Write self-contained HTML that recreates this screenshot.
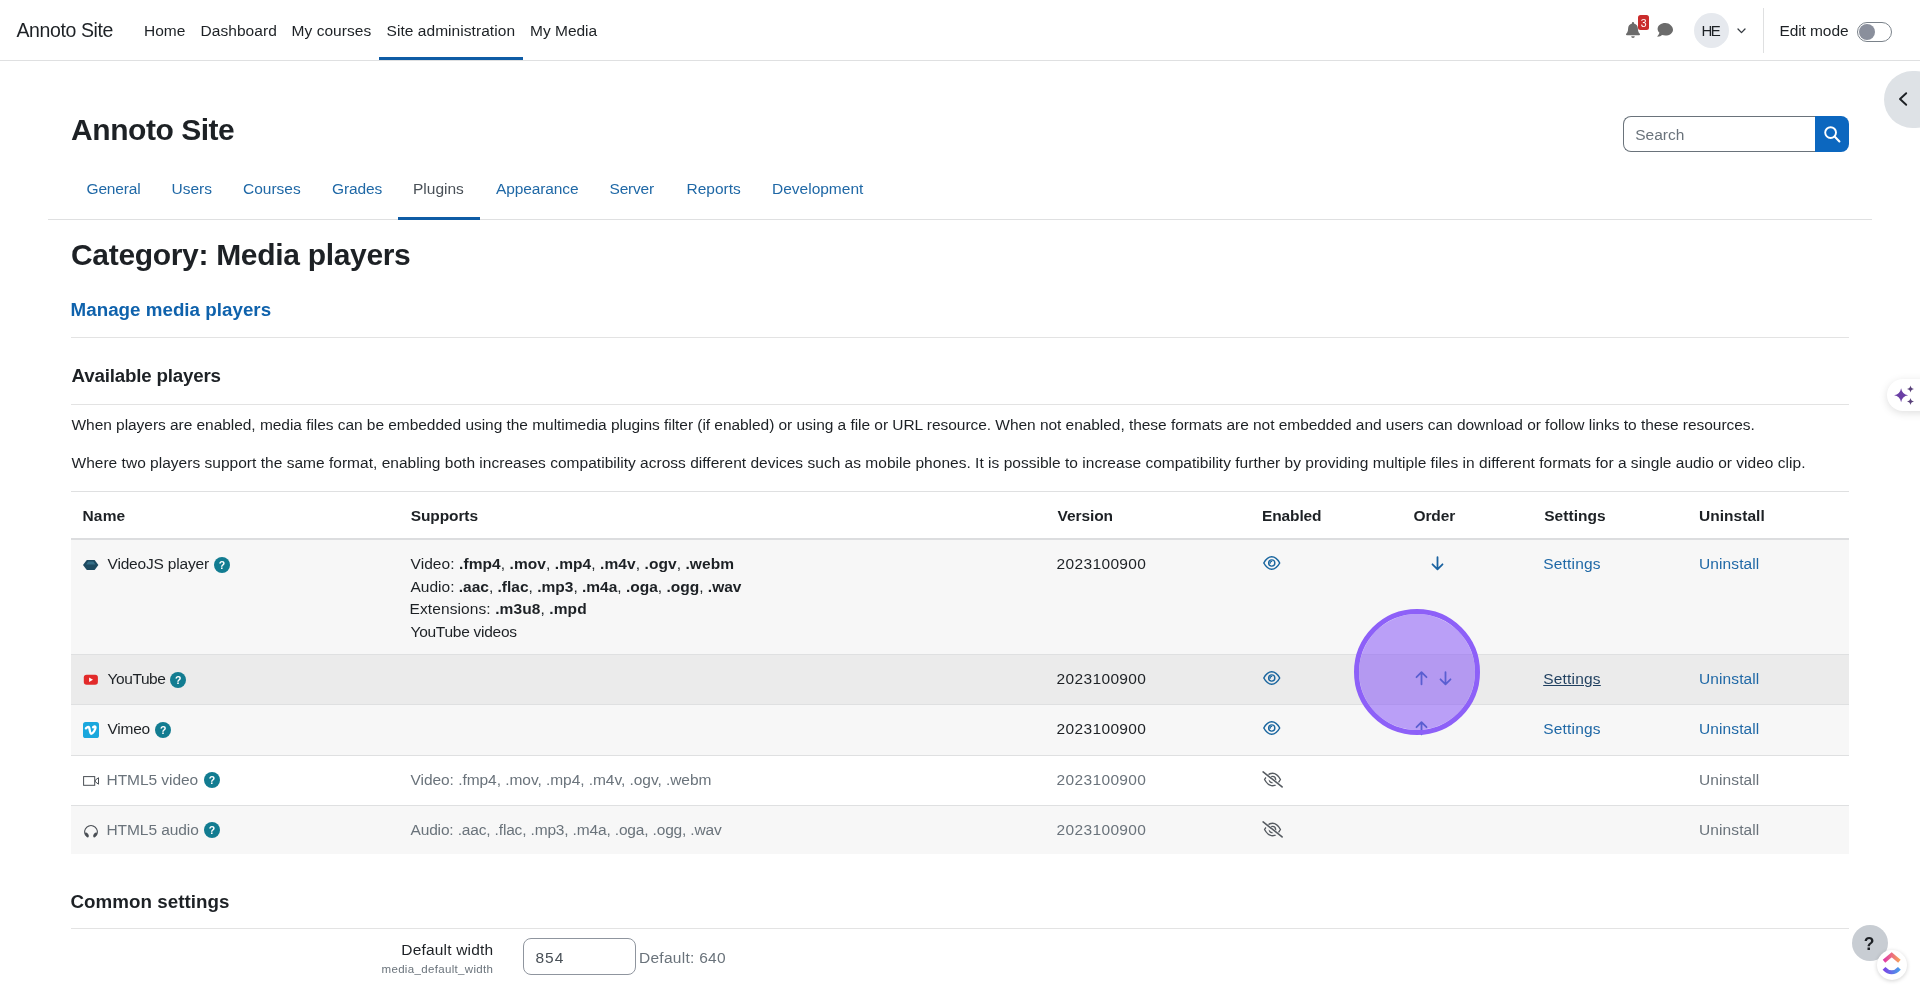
<!DOCTYPE html>
<html lang="en">
<head>
<meta charset="utf-8">
<title>Annoto Site: Administration: Plugins: Media players</title>
<style>
html,body{margin:0;padding:0;background:#fff;}
body{width:1920px;height:993px;position:relative;overflow:hidden;font-family:"Liberation Sans",sans-serif;color:#1d2125;}
.t{position:absolute;white-space:nowrap;font-family:"Liberation Sans",sans-serif;}
.t b{font-weight:700;}
.a{position:absolute;}
.hl{position:absolute;height:1px;background:#dfe0e1;}
svg{position:absolute;overflow:visible;}
.help{position:absolute;width:16px;height:16px;border-radius:50%;background:#127c91;color:#fff;font:700 10.5px/17.400px "Liberation Sans",sans-serif;text-align:center;}
</style>
</head>
<body>
<div id="page" style="position:absolute;left:0;top:0;width:1920px;height:993px;will-change:transform;">
<!-- ===== top navbar ===== -->
<div class="hl" style="left:0;top:60px;width:1920px;"></div>
<div class="a" style="left:379px;top:57px;width:144px;height:3px;background:#0f5ca5;"></div>
<!-- bell -->
<svg style="left:1625px;top:21px;" width="16" height="18" viewBox="0 0 16 18"><path d="M8 0.9c-.55 0-1 .45-1 1v.55C4.6 2.95 3.1 5 3.1 7.4c0 2.6-.7 4-1.7 5.1-.3.33-.45.6-.4.95.06.42.42.75.9.75h12.2c.48 0 .84-.33.9-.75.05-.35-.1-.62-.4-.95-1-1.1-1.7-2.5-1.7-5.1 0-2.4-1.5-4.45-3.9-4.95V1.9c0-.55-.45-1-1-1z" fill="#6b6b6b"/><path d="M6.2 15.2a1.8 1.8 0 0 0 3.6 0z" fill="#6b6b6b"/></svg>
<div class="a" style="left:1638px;top:15px;width:11px;height:15px;border-radius:2.5px;background:#ca2c2c;"></div>
<!-- chat -->
<svg style="left:1656px;top:22px;" width="18" height="16" viewBox="0 0 18 16"><path d="M9.3 1C5 1 1.6 3.6 1.6 6.9c0 1.5.7 2.85 1.85 3.9-.3 1.3-1.05 2.5-2.05 3.5-.15.15-.05.45.2.45 1.9 0 3.55-.85 4.6-1.65.95.3 2 .5 3.1.5 4.3 0 7.7-2.65 7.7-5.9S13.600 1 9.3 1z" fill="#6b6b6b"/></svg>
<!-- avatar -->
<div class="a" style="left:1694px;top:13px;width:35px;height:35px;border-radius:50%;background:#e6e9ee;"></div>
<!-- caret -->
<svg style="left:1737px;top:28px;" width="9" height="6" viewBox="0 0 9 6"><path d="M1 1 L4.5 4.6 L8 1" fill="none" stroke="#343a40" stroke-width="1.3" stroke-linecap="round" stroke-linejoin="round"/></svg>
<!-- divider -->
<div class="a" style="left:1763px;top:8px;width:1px;height:45px;background:#dfe0e1;"></div>
<!-- toggle -->
<div class="a" style="left:1857px;top:22px;width:35px;height:20px;box-sizing:border-box;border:1px solid #7a828a;border-radius:10px;background:#fff;"></div>
<div class="a" style="left:1859px;top:24px;width:16px;height:16px;border-radius:50%;background:#8a8f9c;"></div>


<!-- ===== drawer toggle ===== -->
<div class="a" style="left:1884px;top:71px;width:60px;height:57px;border-radius:29px;background:#dee2e6;"></div>
<svg style="left:1898px;top:92px;" width="10" height="14" viewBox="0 0 10 14"><path d="M8.2 1.2 L2 7 L8.2 12.8" fill="none" stroke="#1d2125" stroke-width="1.9" stroke-linecap="round" stroke-linejoin="round"/></svg>

<!-- ===== search ===== -->
<div class="a" style="left:1623px;top:116px;width:192px;height:36px;box-sizing:border-box;border:1px solid #6a737b;border-right:0;border-radius:8px 0 0 8px;background:#fff;"></div>
<div class="a" style="left:1815px;top:116px;width:34px;height:36px;border-radius:0 8px 8px 0;background:#0c67bf;"></div>
<svg style="left:1823px;top:125px;" width="18" height="18" viewBox="0 0 18 18"><circle cx="7.6" cy="7.6" r="5.4" fill="none" stroke="#fff" stroke-width="1.9"/><path d="M11.6 11.6 L16.4 16.4" stroke="#fff" stroke-width="2.1" stroke-linecap="round"/></svg>

<!-- ===== secondary nav ===== -->
<div class="hl" style="left:48px;top:219px;width:1824px;"></div>
<div class="a" style="left:398px;top:217px;width:82px;height:3px;background:#0f5ca5;"></div>

<!-- ===== section rules ===== -->
<div class="hl" style="left:71px;top:337px;width:1778px;background:#e3e3e3;"></div>
<div class="hl" style="left:71px;top:404px;width:1778px;background:#e3e3e3;"></div>
<div class="hl" style="left:71px;top:928px;width:1778px;background:#e3e3e3;"></div>

<!-- ===== table ===== -->
<div class="hl" style="left:71px;top:491px;width:1778px;"></div>
<div class="a" style="left:71px;top:538px;width:1778px;height:2px;background:#dcdddf;"></div>
<div class="a" style="left:71px;top:540px;width:1778px;height:114px;background:#f7f7f7;"></div>
<div class="hl" style="left:71px;top:654px;width:1778px;"></div>
<div class="a" style="left:71px;top:655px;width:1778px;height:49px;background:#ebebeb;"></div>
<div class="hl" style="left:71px;top:704px;width:1778px;"></div>
<div class="a" style="left:71px;top:705px;width:1778px;height:50px;background:#f7f7f7;"></div>
<div class="hl" style="left:71px;top:755px;width:1778px;"></div>
<div class="hl" style="left:71px;top:805px;width:1778px;"></div>
<div class="a" style="left:71px;top:806px;width:1778px;height:48px;background:#f7f7f7;"></div>
<svg style="left:82px;top:559px;" width="18" height="12" viewBox="0 0 18 12"><path d="M1 6 L4.8 1 H12.600 L16.400 6 L12.600 11 H4.8 Z" fill="#1d4a60"/><path d="M4.2 5.6 L6.2 2.6 H11.400 L13.400 5.6 Z" fill="#3f7d98" opacity=".7"/></svg>
<div class="help" style="left:214px;top:557px;">?</div>
<svg style="left:83px;top:674px;" width="16" height="12" viewBox="0 0 16 12"><rect x="0.8" y="0.7" width="14.100" height="10.100" rx="2.800" fill="#e22a2a"/><path d="M6.100 3.500 L10 5.750 L6.100 8 Z" fill="#fff"/></svg>
<div class="help" style="left:170.2px;top:671.8px;">?</div>
<svg style="left:83px;top:722px;" width="16" height="16" viewBox="0 0 16 16"><rect x="0" y="0" width="16" height="16" rx="2.600" fill="#1aa7dd"/><path d="M2.900 6.400 C4.200 5.100 5.500 4.200 6.100 5.500 C6.800 7.100 6.900 11.800 8.100 11.800 C9.600 11.800 12.900 7.400 12.500 5.100 C12.300 4 10.900 4.200 10.100 5.300" fill="none" stroke="#fff" stroke-width="2.300" stroke-linecap="round" stroke-linejoin="round"/></svg>
<div class="help" style="left:155.3px;top:721.8px;">?</div>
<svg style="left:83px;top:775px;" width="17" height="12" viewBox="0 0 17 12"><rect x="0.6" y="1.600" width="11.100" height="8.700" fill="none" stroke="#4a4f55" stroke-width="1"/><path d="M12.300 5.100 L15.500 2.700 V9.200 L12.300 6.800 Z" fill="none" stroke="#4a4f55" stroke-width="1" stroke-linejoin="miter"/></svg>
<div class="help" style="left:204px;top:772px;">?</div>
<svg style="left:83px;top:824px;" width="16" height="15" viewBox="0 0 16 15"><path d="M2.700 11.300 A6.300 6.300 0 1 1 13.300 11.300" fill="none" stroke="#4a4f55" stroke-width="1.300"/><ellipse cx="3.900" cy="10.900" rx="1.500" ry="2.700" transform="rotate(-32 3.900 10.900)" fill="#4a4f55"/><ellipse cx="12.100" cy="10.900" rx="1.500" ry="2.700" transform="rotate(32 12.100 10.900)" fill="#4a4f55"/></svg>
<div class="help" style="left:204px;top:822px;">?</div>
<svg style="left:1262.75px;top:555.85px;" width="17.5" height="14" viewBox="0 0 17.5 14"><path d="M0.8 7 C3 3 5.900 0.8 8.75 0.8 S14.500 3 16.700 7 C14.500 11 11.600 13.200 8.75 13.200 S3 11 0.8 7 Z" fill="none" stroke="#1a669f" stroke-width="1.5" stroke-linejoin="round"/><circle cx="8.75" cy="7" r="3.100" fill="none" stroke="#1a669f" stroke-width="1.400"/><path d="M7.100 7.200 A1.700 1.700 0 0 1 8.600 5.400" fill="none" stroke="#1a669f" stroke-width="1.300" stroke-linecap="round"/></svg>
<svg style="left:1262.75px;top:671px;" width="17.5" height="14" viewBox="0 0 17.5 14"><path d="M0.8 7 C3 3 5.900 0.8 8.75 0.8 S14.500 3 16.700 7 C14.500 11 11.600 13.200 8.75 13.200 S3 11 0.8 7 Z" fill="none" stroke="#1a669f" stroke-width="1.5" stroke-linejoin="round"/><circle cx="8.75" cy="7" r="3.100" fill="none" stroke="#1a669f" stroke-width="1.400"/><path d="M7.100 7.200 A1.700 1.700 0 0 1 8.600 5.400" fill="none" stroke="#1a669f" stroke-width="1.300" stroke-linecap="round"/></svg>
<svg style="left:1262.75px;top:720.7px;" width="17.5" height="14" viewBox="0 0 17.5 14"><path d="M0.8 7 C3 3 5.900 0.8 8.75 0.8 S14.500 3 16.700 7 C14.500 11 11.600 13.200 8.75 13.200 S3 11 0.8 7 Z" fill="none" stroke="#1a669f" stroke-width="1.5" stroke-linejoin="round"/><circle cx="8.75" cy="7" r="3.100" fill="none" stroke="#1a669f" stroke-width="1.400"/><path d="M7.100 7.200 A1.700 1.700 0 0 1 8.600 5.400" fill="none" stroke="#1a669f" stroke-width="1.300" stroke-linecap="round"/></svg>
<svg style="left:1262.0px;top:770.5px;" width="21" height="17" viewBox="0 0 21 17"><g transform="translate(1.75 1.500)"><path d="M0.8 7 C3 3 5.900 0.8 8.75 0.8 S14.500 3 16.700 7 C14.500 11 11.600 13.200 8.750 13.200 S3 11 0.8 7 Z" fill="none" stroke="#565b61" stroke-width="1.400" stroke-linejoin="round"/><circle cx="8.75" cy="7" r="3.100" fill="none" stroke="#565b61" stroke-width="1.400"/></g><path d="M0.400 1.300 L20.300 16.700" stroke="#ffffff" stroke-width="3.800"/><path d="M1.100 0.900 L20.100 15.900" stroke="#565b61" stroke-width="1.600" stroke-linecap="round"/></svg>
<svg style="left:1262.0px;top:820.5px;" width="21" height="17" viewBox="0 0 21 17"><g transform="translate(1.75 1.500)"><path d="M0.8 7 C3 3 5.900 0.8 8.75 0.8 S14.500 3 16.700 7 C14.500 11 11.600 13.200 8.750 13.200 S3 11 0.8 7 Z" fill="none" stroke="#565b61" stroke-width="1.400" stroke-linejoin="round"/><circle cx="8.75" cy="7" r="3.100" fill="none" stroke="#565b61" stroke-width="1.400"/></g><path d="M0.400 1.300 L20.300 16.700" stroke="#f7f7f7" stroke-width="3.800"/><path d="M1.100 0.900 L20.100 15.900" stroke="#565b61" stroke-width="1.600" stroke-linecap="round"/></svg>
<svg style="left:1430.7px;top:555.5px;" width="13" height="14.5" viewBox="0 0 13 14.5"><g><path d="M6.5 1.200 V13.200 M1.500 8.300 L6.500 13.300 L11.500 8.300" fill="none" stroke="#1a62a0" stroke-width="1.800" stroke-linecap="round" stroke-linejoin="round"/></g></svg>
<svg style="left:1414.5px;top:671.25px;" width="13" height="14.5" viewBox="0 0 13 14.5"><g transform="rotate(180 6.5 7.25)"><path d="M6.5 1.200 V13.200 M1.500 8.300 L6.500 13.300 L11.500 8.300" fill="none" stroke="#1a62a0" stroke-width="1.800" stroke-linecap="round" stroke-linejoin="round"/></g></svg>
<svg style="left:1439.0px;top:671.25px;" width="13" height="14.5" viewBox="0 0 13 14.5"><g><path d="M6.5 1.200 V13.200 M1.500 8.300 L6.500 13.300 L11.500 8.300" fill="none" stroke="#1a62a0" stroke-width="1.800" stroke-linecap="round" stroke-linejoin="round"/></g></svg>
<svg style="left:1414.5px;top:720.75px;" width="13" height="14.5" viewBox="0 0 13 14.5"><g transform="rotate(180 6.5 7.25)"><path d="M6.5 1.200 V13.200 M1.500 8.300 L6.500 13.300 L11.500 8.300" fill="none" stroke="#1a62a0" stroke-width="1.800" stroke-linecap="round" stroke-linejoin="round"/></g></svg>

<!-- ===== form ===== -->
<div class="a" style="left:523px;top:938px;width:113px;height:37px;box-sizing:border-box;border:1px solid #8f959e;border-radius:8px;background:#fff;"></div>

<!-- purple click highlight -->
<div class="a" style="left:1353.500px;top:609.400px;width:126px;height:126px;box-sizing:border-box;border-radius:50%;border:5.5px solid #8d60f8;background:rgba(139,92,246,0.57);background-clip:padding-box;"></div>
<!-- sparkle pill -->
<div class="a" style="left:1887px;top:379px;width:60px;height:32px;border-radius:16px;background:#fff;box-shadow:0 2px 8px rgba(0,0,0,.13);"></div>
<svg style="left:1892px;top:384px;" width="24" height="22" viewBox="0 0 24 22"><path d="M9.1 4.20 C9.79 8.27 12.03 10.51 16.10 11.2 C12.03 11.89 9.79 14.13 9.1 18.20 C8.41 14.13 6.17 11.89 2.10 11.2 C6.17 10.51 8.41 8.27 9.1 4.20 Z" fill="#6a3fa5"/><path d="M18.5 1.40 C18.85 3.44 19.96 4.55 22.00 4.9 C19.96 5.25 18.85 6.36 18.5 8.40 C18.15 6.36 17.04 5.25 15.00 4.9 C17.04 4.55 18.15 3.44 18.5 1.40 Z" fill="#59417a"/><path d="M18.5 14.00 C18.85 16.04 19.96 17.15 22.00 17.5 C19.96 17.85 18.85 18.96 18.5 21.00 C18.15 18.96 17.04 17.85 15.00 17.5 C17.04 17.15 18.15 16.04 18.5 14.00 Z" fill="#59417a"/></svg>
<!-- help fab -->
<div class="a" style="left:1852px;top:925px;width:36px;height:36px;border-radius:50%;background:#c8cdd3;"></div>
<!-- clickup -->
<div class="a" style="left:1877px;top:950px;width:30px;height:30px;border-radius:50%;background:#fff;box-shadow:0 1px 4px rgba(0,0,0,.18);"></div>
<svg style="left:1881px;top:952px;" width="22" height="26" viewBox="0 0 22 26"><defs><linearGradient id="cu1" x1="0" y1="0" x2="1" y2="0"><stop offset="0" stop-color="#e03aa8"/><stop offset="1" stop-color="#f5a05a"/></linearGradient><linearGradient id="cu2" x1="0" y1="0" x2="1" y2="0"><stop offset="0" stop-color="#7a45e6"/><stop offset="1" stop-color="#4a9bea"/></linearGradient></defs><path d="M3 9.300 L10.700 2.800 L18.400 9.300" fill="none" stroke="url(#cu1)" stroke-width="3.900" stroke-linejoin="miter"/><path d="M3 16.300 Q10.700 24.300 18.400 16.300" fill="none" stroke="url(#cu2)" stroke-width="3.900"/></svg>


<span class="t" style="left:16.50px;top:17.29px;font-size:19.5px;line-height:27px;font-weight:400;color:#1d2125;letter-spacing:-0.400px;">Annoto Site</span>
<span class="t" style="left:144.00px;top:20.43px;font-size:15.5px;line-height:22px;font-weight:400;color:#1d2125;">Home</span>
<span class="t" style="left:200.50px;top:20.43px;font-size:15.5px;line-height:22px;font-weight:400;color:#1d2125;letter-spacing:0.062px;">Dashboard</span>
<span class="t" style="left:291.50px;top:20.43px;font-size:15.5px;line-height:22px;font-weight:400;color:#1d2125;letter-spacing:0.056px;">My courses</span>
<span class="t" style="left:386.50px;top:20.43px;font-size:15.5px;line-height:22px;font-weight:400;color:#1d2125;letter-spacing:0.056px;">Site administration</span>
<span class="t" style="left:530.00px;top:20.43px;font-size:15.5px;line-height:22px;font-weight:400;color:#1d2125;">My Media</span>
<span class="t" style="left:1701.50px;top:20.45px;font-size:15px;line-height:21px;font-weight:400;color:#1d2125;letter-spacing:-1.500px;">HE</span>
<span class="t" style="left:1779.50px;top:20.43px;font-size:15.5px;line-height:22px;font-weight:400;color:#1d2125;letter-spacing:-0.094px;">Edit mode</span>
<span class="t" style="left:1640.75px;top:15.91px;font-size:10.5px;line-height:15px;font-weight:400;color:#fff;">3</span>
<span class="t" style="left:71.10px;top:109.46px;font-size:30px;line-height:42px;font-weight:700;color:#1d2125;letter-spacing:-0.460px;">Annoto Site</span>
<span class="t" style="left:1635.25px;top:124.18px;font-size:15.5px;line-height:22px;font-weight:400;color:#6a737b;">Search</span>
<span class="t" style="left:86.50px;top:178.18px;font-size:15.5px;line-height:22px;font-weight:400;color:#1f68a6;letter-spacing:-0.167px;">General</span>
<span class="t" style="left:171.50px;top:178.18px;font-size:15.5px;line-height:22px;font-weight:400;color:#1f68a6;">Users</span>
<span class="t" style="left:243.00px;top:178.18px;font-size:15.5px;line-height:22px;font-weight:400;color:#1f68a6;">Courses</span>
<span class="t" style="left:332.00px;top:178.18px;font-size:15.5px;line-height:22px;font-weight:400;color:#1f68a6;letter-spacing:-0.100px;">Grades</span>
<span class="t" style="left:413.00px;top:178.18px;font-size:15.5px;line-height:22px;font-weight:400;color:#495057;">Plugins</span>
<span class="t" style="left:496.00px;top:178.18px;font-size:15.5px;line-height:22px;font-weight:400;color:#1f68a6;letter-spacing:-0.111px;">Appearance</span>
<span class="t" style="left:609.50px;top:178.18px;font-size:15.5px;line-height:22px;font-weight:400;color:#1f68a6;letter-spacing:-0.200px;">Server</span>
<span class="t" style="left:686.50px;top:178.18px;font-size:15.5px;line-height:22px;font-weight:400;color:#1f68a6;">Reports</span>
<span class="t" style="left:772.00px;top:178.18px;font-size:15.5px;line-height:22px;font-weight:400;color:#1f68a6;">Development</span>
<span class="t" style="left:71.00px;top:234.16px;font-size:30px;line-height:42px;font-weight:700;color:#1d2125;letter-spacing:-0.318px;">Category: Media players</span>
<span class="t" style="left:70.60px;top:296.65px;font-size:18.75px;line-height:26px;font-weight:700;color:#0f62ac;letter-spacing:0.021px;">Manage media players</span>
<span class="t" style="left:71.60px;top:362.85px;font-size:18.75px;line-height:26px;font-weight:700;color:#1d2125;letter-spacing:-0.194px;">Available players</span>
<span class="t" style="left:71.50px;top:413.78px;font-size:15.5px;line-height:22px;font-weight:400;color:#1d2125;letter-spacing:-0.045px;">When players are enabled, media files can be embedded using the multimedia plugins filter (if enabled) or using a file or URL resource. When not enabled, these formats are not embedded and users can download or follow links to these resources.</span>
<span class="t" style="left:71.50px;top:451.68px;font-size:15.5px;line-height:22px;font-weight:400;color:#1d2125;letter-spacing:0.021px;">Where two players support the same format, enabling both increases compatibility across different devices such as mobile phones. It is possible to increase compatibility further by providing multiple files in different formats for a single audio or video clip.</span>
<span class="t" style="left:82.50px;top:504.78px;font-size:15.5px;line-height:22px;font-weight:700;color:#1d2125;letter-spacing:0.167px;">Name</span>
<span class="t" style="left:410.75px;top:504.78px;font-size:15.5px;line-height:22px;font-weight:700;color:#1d2125;letter-spacing:-0.107px;">Supports</span>
<span class="t" style="left:1057.50px;top:504.78px;font-size:15.5px;line-height:22px;font-weight:700;color:#1d2125;letter-spacing:-0.083px;">Version</span>
<span class="t" style="left:1262.00px;top:504.78px;font-size:15.5px;line-height:22px;font-weight:700;color:#1d2125;letter-spacing:-0.125px;">Enabled</span>
<span class="t" style="left:1413.50px;top:504.78px;font-size:15.5px;line-height:22px;font-weight:700;color:#1d2125;letter-spacing:-0.125px;">Order</span>
<span class="t" style="left:1544.20px;top:504.78px;font-size:15.5px;line-height:22px;font-weight:700;color:#1d2125;letter-spacing:0.043px;">Settings</span>
<span class="t" style="left:1699.00px;top:504.78px;font-size:15.5px;line-height:22px;font-weight:700;color:#1d2125;letter-spacing:0.037px;">Uninstall</span>
<span class="t" style="left:107.50px;top:552.93px;font-size:15.5px;line-height:22px;font-weight:400;color:#1d2125;letter-spacing:-0.173px;">VideoJS player</span>
<span class="t" style="left:410.50px;top:552.93px;font-size:15.5px;line-height:22px;font-weight:400;color:#1d2125;letter-spacing:0.077px;">Video: <b>.fmp4</b>, <b>.mov</b>, <b>.mp4</b>, <b>.m4v</b>, <b>.ogv</b>, <b>.webm</b></span>
<span class="t" style="left:410.50px;top:575.93px;font-size:15.5px;line-height:22px;font-weight:400;color:#1d2125;">Audio: <b>.aac</b>, <b>.flac</b>, <b>.mp3</b>, <b>.m4a</b>, <b>.oga</b>, <b>.ogg</b>, <b>.wav</b></span>
<span class="t" style="left:409.50px;top:598.43px;font-size:15.5px;line-height:22px;font-weight:400;color:#1d2125;letter-spacing:0.102px;">Extensions: <b>.m3u8</b>, <b>.mpd</b></span>
<span class="t" style="left:410.50px;top:621.18px;font-size:15.5px;line-height:22px;font-weight:400;color:#1d2125;letter-spacing:-0.269px;">YouTube videos</span>
<span class="t" style="left:1056.50px;top:552.93px;font-size:15.5px;line-height:22px;font-weight:400;color:#1d2125;letter-spacing:0.361px;">2023100900</span>
<span class="t" style="left:1543.20px;top:552.93px;font-size:15.5px;line-height:22px;font-weight:400;color:#1f68a6;letter-spacing:0.200px;">Settings</span>
<span class="t" style="left:1699.00px;top:552.93px;font-size:15.5px;line-height:22px;font-weight:400;color:#1f68a6;letter-spacing:0.100px;">Uninstall</span>
<span class="t" style="left:107.50px;top:667.93px;font-size:15.5px;line-height:22px;font-weight:400;color:#1d2125;letter-spacing:-0.417px;">YouTube</span>
<span class="t" style="left:1056.50px;top:667.93px;font-size:15.5px;line-height:22px;font-weight:400;color:#1d2125;letter-spacing:0.361px;">2023100900</span>
<span class="t" style="left:1543.20px;top:667.93px;font-size:15.5px;line-height:22px;font-weight:400;color:#1f3f5f;letter-spacing:0.200px;text-decoration:underline;">Settings</span>
<span class="t" style="left:1699.00px;top:667.93px;font-size:15.5px;line-height:22px;font-weight:400;color:#1f68a6;letter-spacing:0.100px;">Uninstall</span>
<span class="t" style="left:107.50px;top:717.93px;font-size:15.5px;line-height:22px;font-weight:400;color:#1d2125;letter-spacing:-0.250px;">Vimeo</span>
<span class="t" style="left:1056.50px;top:717.93px;font-size:15.5px;line-height:22px;font-weight:400;color:#1d2125;letter-spacing:0.361px;">2023100900</span>
<span class="t" style="left:1543.20px;top:717.93px;font-size:15.5px;line-height:22px;font-weight:400;color:#1f68a6;letter-spacing:0.200px;">Settings</span>
<span class="t" style="left:1699.00px;top:717.93px;font-size:15.5px;line-height:22px;font-weight:400;color:#1f68a6;letter-spacing:0.100px;">Uninstall</span>
<span class="t" style="left:106.50px;top:768.68px;font-size:15.5px;line-height:22px;font-weight:400;color:#6a737b;letter-spacing:-0.050px;">HTML5 video</span>
<span class="t" style="left:410.50px;top:768.68px;font-size:15.5px;line-height:22px;font-weight:400;color:#6a737b;letter-spacing:-0.048px;">Video: .fmp4, .mov, .mp4, .m4v, .ogv, .webm</span>
<span class="t" style="left:1056.50px;top:768.68px;font-size:15.5px;line-height:22px;font-weight:400;color:#6a737b;letter-spacing:0.361px;">2023100900</span>
<span class="t" style="left:1699.00px;top:768.68px;font-size:15.5px;line-height:22px;font-weight:400;color:#6a737b;letter-spacing:0.100px;">Uninstall</span>
<span class="t" style="left:106.50px;top:818.68px;font-size:15.5px;line-height:22px;font-weight:400;color:#6a737b;letter-spacing:-0.075px;">HTML5 audio</span>
<span class="t" style="left:410.50px;top:818.68px;font-size:15.5px;line-height:22px;font-weight:400;color:#6a737b;letter-spacing:-0.160px;">Audio: .aac, .flac, .mp3, .m4a, .oga, .ogg, .wav</span>
<span class="t" style="left:1056.50px;top:818.68px;font-size:15.5px;line-height:22px;font-weight:400;color:#6a737b;letter-spacing:0.361px;">2023100900</span>
<span class="t" style="left:1699.00px;top:818.68px;font-size:15.5px;line-height:22px;font-weight:400;color:#6a737b;letter-spacing:0.100px;">Uninstall</span>
<span class="t" style="left:70.50px;top:888.55px;font-size:18.75px;line-height:26px;font-weight:700;color:#1d2125;letter-spacing:0.036px;">Common settings</span>
<span class="t" style="left:401.30px;top:938.78px;font-size:15.5px;line-height:22px;font-weight:400;color:#1d2125;letter-spacing:0.183px;">Default width</span>
<span class="t" style="left:381.50px;top:961.07px;font-size:11.5px;line-height:16px;font-weight:400;color:#6a737b;letter-spacing:0.333px;">media_default_width</span>
<span class="t" style="left:535.50px;top:946.68px;font-size:15.5px;line-height:22px;font-weight:400;color:#495057;letter-spacing:1.000px;">854</span>
<span class="t" style="left:639.00px;top:946.68px;font-size:15.5px;line-height:22px;font-weight:400;color:#6a737b;letter-spacing:0.273px;">Default: 640</span>
<span class="t" style="left:1863.80px;top:931.89px;font-size:17.5px;line-height:24px;font-weight:700;color:#1d2125;">?</span>
</div>
</body>
</html>
